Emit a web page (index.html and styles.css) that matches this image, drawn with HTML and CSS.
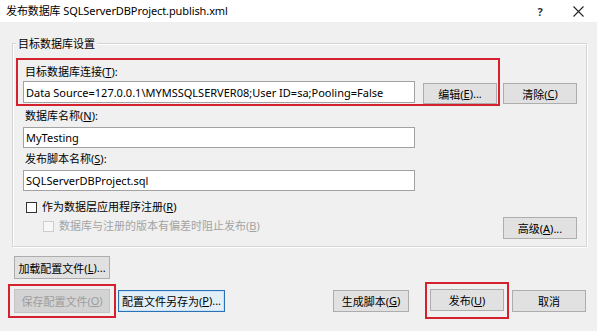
FILE: index.html
```html
<!DOCTYPE html>
<html lang="zh-CN">
<head>
<meta charset="utf-8">
<title>发布数据库</title>
<link rel="stylesheet" href="styles.css">
</head>
<body>
<div class="titlebar">
  <span class="title">发布数据库 SQLServerDBProject.publish.xml</span>
  <span class="help">?</span>
  <span class="close"><svg width="11" height="11" viewBox="0 0 11 11"><path d="M0.5 0.5 L10.5 10.5 M10.5 0.5 L0.5 10.5" stroke="#222" stroke-width="1.1" fill="none"/></svg></span>
</div>
<div class="group">
  <div class="legend">目标数据库设置</div>
  <div class="conn-row">
    <div class="hl hl-conn">
      <div class="lbl">目标数据库连接(<u>T</u>):</div>
      <div class="field-row">
        <div class="textbox tb-conn">Data Source=127.0.0.1\MYMSSQLSERVER08;User ID=sa;Pooling=False</div>
        <div class="btn btn-edit">编辑(<u>E</u>)...</div>
      </div>
    </div>
    <div class="btn btn-clear">清除(<u>C</u>)</div>
  </div>
  <div class="lbl lbl-gap">数据库名称(<u>N</u>):</div>
  <div class="textbox tb-field">MyTesting</div>
  <div class="lbl lbl-gap">发布脚本名称(<u>S</u>):</div>
  <div class="textbox tb-field">SQLServerDBProject.sql</div>
  <div class="bottom-row">
    <div class="checks">
      <div class="check-row"><span class="cb"></span><span>作为数据层应用程序注册(<u>R</u>)</span></div>
      <div class="check-row sub disabled"><span class="cb"></span><span>数据库与注册的版本有偏差时阻止发布(<u>B</u>)</span></div>
    </div>
    <div class="btn btn-adv">高级(<u>A</u>)...</div>
  </div>
</div>
<div class="btn btn-load">加载配置文件(<u>L</u>)...</div>
<div class="actions">
  <div class="hl hl-save"><div class="btn btn-disabled btn-save">保存配置文件(<u>O</u>)</div></div>
  <div class="btn btn-focus btn-saveas">配置文件另存为(<u>P</u>)...</div>
  <div class="btn btn-gen">生成脚本(<u>G</u>)</div>
  <div class="hl hl-publish"><div class="btn btn-std">发布(<u>U</u>)</div></div>
  <div class="btn btn-std btn-cancel">取消</div>
</div>
</body>
</html>
```
FILE: styles.css
```css
* { box-sizing: border-box; }
html, body { margin: 0; padding: 0; }
body {
  width: 597px;
  height: 331px;
  overflow: hidden;
  background: #f0f0f0;
  font-family: "Noto Sans", "Noto Sans CJK SC", sans-serif;
  font-size: 11px;
  color: #000;
}
u { text-decoration: underline; text-underline-offset: 1px; }

.titlebar {
  height: 22px;
  background: #fff;
  display: flex;
  align-items: center;
  padding-left: 6px;
}
.title { flex: 1; line-height: 16px; font-size: 11px; letter-spacing: -0.1px; }
.help {
  width: 14px;
  text-align: center;
  font-size: 11px;
  font-weight: bold;
  color: #333;
  margin-right: 26px;
}
.close { width: 11px; height: 11px; margin-right: 13px; display: flex; }

.group {
  margin: 21px 10px 0 12px;
  border: 1px solid #d5d5d5;
  box-shadow: inset 1px 1px 0 #fff, 1px 1px 0 #fff;
  padding: 0 9px 7px 10px;
  display: flex;
  flex-direction: column;
}
.legend {
  align-self: flex-start;
  margin: -8px 0 0 -7px;
  padding: 0 2px;
  background: #f0f0f0;
  line-height: 16px;
}
.conn-row {
  display: flex;
  align-items: flex-end;
  margin: 6px 0 0 -7px;
}
.hl { border: 2px solid #d3212d; }
.hl-conn { width: 484px; padding: 4px 1px 0 5px; }
.lbl { line-height: 16px; margin-left: 2px; }
.lbl-gap { margin-top: 3px; }
.conn-row + .lbl-gap { margin-top: 2px; }
.field-row { display: flex; align-items: flex-start; margin-top: 1px; }

.textbox {
  background: #fff;
  border: 1px solid #a2a2a2;
  display: flex;
  align-items: center;
  padding-left: 2px;
  white-space: nowrap;
  overflow: hidden;
}
.tb-conn { width: 392px; height: 22px; }
.tb-field { width: 392px; height: 21px; margin-top: 3px; }

.btn {
  display: flex;
  align-items: center;
  justify-content: center;
  height: 22px;
  background: #e1e1e1;
  border: 1px solid #adadad;
  white-space: nowrap;
}
.btn-edit { width: 74px; height: 21px; margin: 2px 0 0 8px; }
.btn-clear { width: 74px; height: 21px; margin: 0 0 2px 3px; }

.bottom-row { display: flex; margin-top: 8px; }
.checks { display: flex; flex-direction: column; }
.check-row { display: flex; align-items: center; line-height: 16px; }
.check-row + .check-row { margin-top: 3px; }
.cb {
  width: 11px;
  height: 11px;
  border: 1px solid #333;
  background: #fff;
  margin: 0 5px 0 3px;
}
.check-row.sub .cb { margin-left: 20px; }
.disabled { color: #a3a3a3; }
.disabled .cb { border-color: #cdcdcd; background: #f7f7f7; }
.btn-adv { width: 74px; margin: 18px 0 0 auto; }

.btn-load { width: 96px; height: 23px; margin: 9px 0 0 14px; }
.actions {
  display: flex;
  align-items: center;
  margin-top: 3px;
  padding: 0 11px 0 8px;
}
.hl-save { padding: 3px 4px; }
.btn-disabled {
  background: #d3d3d3;
  border-color: #c4c4c4;
  color: #9d9d9d;
}
.btn-save { width: 96px; height: 24px; }
.btn-focus {
  background: #e2eff9;
  border: 1px solid #2a72b5;
  box-shadow: inset 0 0 0 1px #c9e1f5;
}
.btn-saveas { width: 107px; margin-left: 2px; }
.btn-gen { width: 76px; margin-left: auto; }
.hl-publish { padding: 5px 3px 6px; margin-left: 16px; }
.btn-std { width: 74px; }
.btn-cancel { margin-left: 3px; }
```
